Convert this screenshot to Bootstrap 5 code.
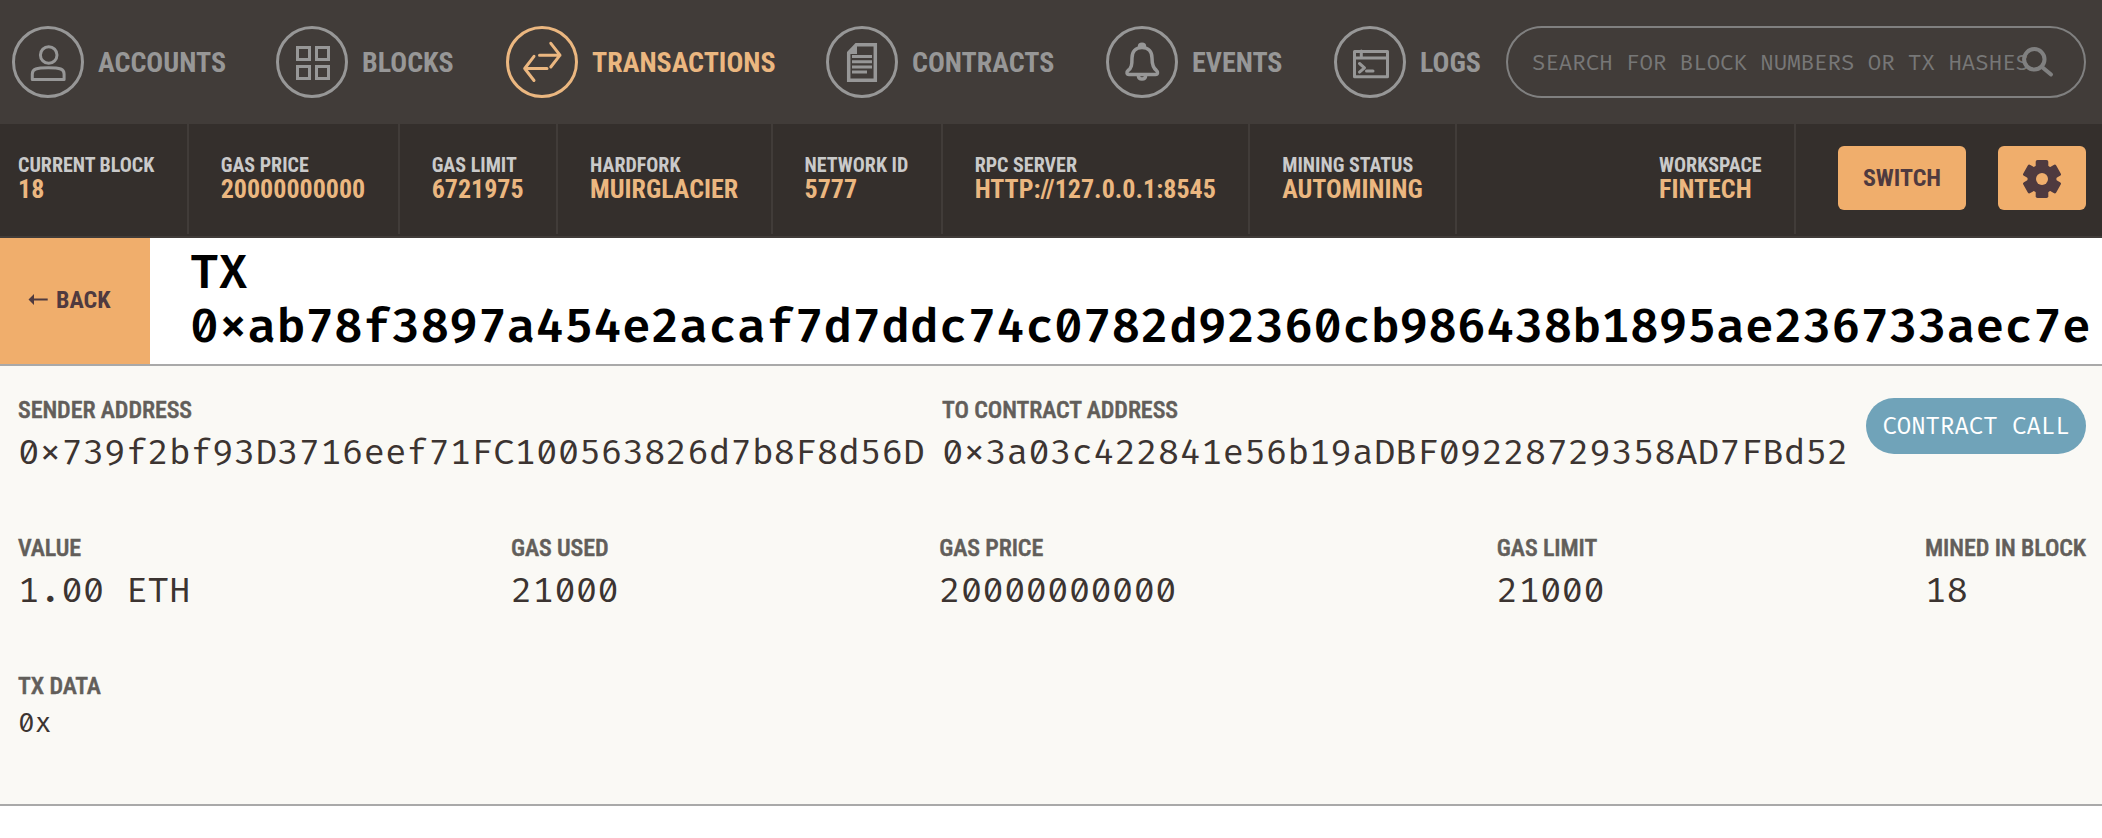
<!DOCTYPE html>
<html lang="en">
<head>
<meta charset="utf-8">
<meta name="viewport" content="width=device-width, initial-scale=1">
<title>TX details</title>
<link rel="stylesheet" href="https://cdn.jsdelivr.net/npm/bootstrap@5.3.0/dist/css/bootstrap.min.css">
<style>
:root{--cond:"Roboto Condensed",Roboto,sans-serif;--code:"Fira Code","Fira Mono","Liberation Mono",monospace;--peach:#ebb780;--peach-solid:#f0ae6c;--plum:#4f3a3f}
body{background:#fff;font-family:var(--cond)}
.topnav{height:124px;background:#413c39;padding:0 16px 0 12px}
.topnav-link{color:#979797;font-weight:700;font-size:28px;line-height:1;white-space:nowrap;text-decoration:none}
.topnav-link svg{width:72px;height:72px;flex:none;margin-right:14px}
.topnav-link span{padding-top:1px}
.topnav-link.current{color:var(--peach)}
.w-accounts{width:264px}.w-blocks{width:230px}.w-tx{width:320px}.w-contracts{width:280px}.w-events{width:228px}
.search{width:580px;height:72px;border:2px solid #808080;border-radius:36px}
.search input{background:none;border:0;outline:0;width:100%;height:100%;padding:2px 24px 0;font:400 21.84px var(--code);color:#777}
.search input::placeholder{color:#777;opacity:1}
.search svg{position:absolute;left:508px;top:15px}
.infobar{height:114px;background:#342f2c;border-bottom:2px solid #413c39;padding-right:16px}
.cell{height:110px;border-right:2px solid #413c39;padding:29px 32.4px 0 32px;font-weight:700;white-space:nowrap}
.cell:first-child{padding-left:18px}
.cell dt{font-size:20px;line-height:24px;color:#cacaca;font-weight:700}
.cell dd{font-size:26px;line-height:24px;color:var(--peach);margin:0}
.btn-peach{--bs-btn-bg:#f0ae6c;--bs-btn-color:#4f3a3f;--bs-btn-hover-bg:#e9a765;--bs-btn-border-radius:6px;border:0;height:64px;font:700 24px/1 var(--cond);padding:0;margin-top:22px}
.btn-switch{width:128px;margin-left:42px;margin-right:32px}
.btn-gear{width:88px}
.titlebar{height:128px;border-bottom:2px solid #a9a9a9}
.back{width:150px;background:var(--peach-solid);color:var(--plum);font:700 24px/1 var(--cond);border:0;padding:0 0 2px 28px}
.titlebar h1{font:600 46.8px/54px var(--code);color:#000;margin:9px 0 0 40px;white-space:nowrap}
.details{height:440px;background:#faf9f5;border-bottom:2px solid #a9a9a9;padding:30px 16px 0 18px;color:#3c3431}
.field{height:138px}
.field h2{font:500 24px/28px var(--cond);letter-spacing:-.08px;-webkit-text-stroke:.5px #625e5a;color:#625e5a;margin:0;white-space:nowrap}
.field p{font:400 35.1px/44px var(--code);margin:8px 0 0;white-space:nowrap}
.field p.bytes{font-size:27.3px;line-height:32px}
.pill{width:220px;height:56px;border-radius:28px;background:#70a3b9;color:#fff;font:400 23.4px/1 var(--code);margin-top:2px;padding-top:2px}
</style>
</head>
<body>
<nav class="topnav d-flex align-items-center">
  <a class="topnav-link d-flex align-items-center w-accounts"><svg viewBox="0 0 72 72" fill="none" stroke="currentColor" stroke-width="3"><circle cx="36" cy="36" r="34.5"/><circle cx="36.7" cy="29" r="8.300"/><path d="M20.300 53.500v-5.500c0-5 4-6.200 16-6.200s15.800 1.200 15.800 6.200v5.500z" stroke-linejoin="round"/></svg><span>ACCOUNTS</span></a>
  <a class="topnav-link d-flex align-items-center w-blocks"><svg viewBox="0 0 72 72" fill="none" stroke="currentColor" stroke-width="3"><circle cx="36" cy="36" r="34.5"/><path d="M21.500 21.500h12v12h-12zM40.500 21.500h12v12h-12zM21.500 40.500h12v12h-12zM40.500 40.500h12v12h-12z"/></svg><span>BLOCKS</span></a>
  <a class="topnav-link current d-flex align-items-center w-tx"><svg viewBox="0 0 72 72" fill="none" stroke="currentColor" stroke-width="3"><circle cx="36" cy="36" r="34.5"/><path d="M33.500 29.200H54M44.800 17.300L54 29.200 44.800 41M41 42.500H18.700M28 30.300L18.700 42.500 28 54.500" stroke-linecap="round" stroke-linejoin="round"/></svg><span>TRANSACTIONS</span></a>
  <a class="topnav-link d-flex align-items-center w-contracts"><svg viewBox="0 0 72 72" fill="none" stroke="currentColor" stroke-width="3"><circle cx="36" cy="36" r="34.5"/><path d="M22.700 27v27.200h26.600V18.700H30" stroke-width="3.500"/><path d="M21 26l8.500-9H31v11H21z" fill="currentColor" stroke="none"/><path d="M26 30.500h20M26 35.700h20M26 40.900h20M26 46h15"/></svg><span>CONTRACTS</span></a>
  <a class="topnav-link d-flex align-items-center w-events"><svg viewBox="0 0 72 72" fill="none" stroke="currentColor" stroke-width="3"><circle cx="36" cy="36" r="34.5"/><path d="M36 21.500c-6.500 0-10 4.500-10 10.500 0 7-.5 10-4 12.500-1.500 1.200-1.500 4 1 4h26.500c2.500 0 2.500-2.800 1-4-3.500-2.500-4.500-5.500-4.500-12.500 0-6-3.500-10.500-10-10.500zM33.500 20.500c0-3 5-3 5 0M32.300 49.500c.3 4.800 7.100 4.800 7.400 0" stroke-width="3.500"/></svg><span>EVENTS</span></a>
  <a class="topnav-link d-flex align-items-center"><svg viewBox="0 0 72 72" fill="none" stroke="currentColor" stroke-width="3"><circle cx="36" cy="36" r="34.5"/><path d="M20.500 25.500h33v25.300h-33zM20.500 32h33M27.300 25v7M25.500 37.500l5 4.300-5 4.300M32.500 45h6.500" stroke-linejoin="round" stroke-linecap="round"/></svg><span>LOGS</span></a>
  <div class="search position-relative ms-auto"><input type="text" placeholder="SEARCH FOR BLOCK NUMBERS OR TX HASHES"><svg width="44" height="44" viewBox="0 0 44 44" fill="none" stroke="#808080" stroke-width="4" stroke-linecap="round"><circle cx="18.300" cy="16.300" r="10.200"/><path d="M26 24l9 7.500"/></svg></div>
</nav>
<div class="infobar d-flex">
  <dl class="cell m-0"><dt>CURRENT BLOCK</dt><dd>18</dd></dl>
  <dl class="cell m-0"><dt>GAS PRICE</dt><dd>20000000000</dd></dl>
  <dl class="cell m-0"><dt>GAS LIMIT</dt><dd>6721975</dd></dl>
  <dl class="cell m-0"><dt>HARDFORK</dt><dd>MUIRGLACIER</dd></dl>
  <dl class="cell m-0"><dt>NETWORK ID</dt><dd>5777</dd></dl>
  <dl class="cell m-0"><dt>RPC SERVER</dt><dd>HTTP://127.0.0.1:8545</dd></dl>
  <dl class="cell m-0"><dt>MINING STATUS</dt><dd>AUTOMINING</dd></dl>
  <dl class="cell m-0 ms-auto"><dt>WORKSPACE</dt><dd>FINTECH</dd></dl>
  <button class="btn btn-peach btn-switch">SWITCH</button>
  <button class="btn btn-peach btn-gear d-flex align-items-center justify-content-center" aria-label="Settings"><svg width="40" height="40" viewBox="-20 -21 40 40" fill="currentColor"><circle r="14.500"/><rect x="-6.300" y="-19" width="12.600" height="38" rx="1.800"/><rect x="-6.300" y="-19" width="12.600" height="38" rx="1.800" transform="rotate(60)"/><rect x="-6.300" y="-19" width="12.600" height="38" rx="1.800" transform="rotate(120)"/><circle r="6" fill="#f0ae6c"/></svg></button>
</div>
<header class="titlebar d-flex">
  <button class="back d-flex align-items-center"><svg class="me-2" width="20" height="12" viewBox="0 0 20 12" fill="currentColor"><path d="M.5 5.500L6 0v4.600h13.700v1.900H6V11z"/></svg>BACK</button>
  <h1>TX<br>0xab78f3897a454e2acaf7d7ddc74c0782d92360cb986438b1895ae236733aec7e</h1>
</header>
<main class="details">
  <div class="d-flex justify-content-between">
    <div class="field"><h2>SENDER ADDRESS</h2><p>0x739f2bf93D3716eef71FC100563826d7b8F8d56D</p></div>
    <div class="field"><h2>TO CONTRACT ADDRESS</h2><p>0x3a03c422841e56b19aDBF09228729358AD7FBd52</p></div>
    <div class="pill d-flex align-items-center justify-content-center">CONTRACT CALL</div>
  </div>
  <div class="d-flex justify-content-between">
    <div class="field"><h2>VALUE</h2><p>1.00 ETH</p></div>
    <div class="field"><h2>GAS USED</h2><p>21000</p></div>
    <div class="field"><h2>GAS PRICE</h2><p>20000000000</p></div>
    <div class="field"><h2>GAS LIMIT</h2><p>21000</p></div>
    <div class="field"><h2>MINED IN BLOCK</h2><p>18</p></div>
  </div>
  <div class="field"><h2>TX DATA</h2><p class="bytes">0x</p></div>
</main>
<script src="https://cdn.jsdelivr.net/npm/bootstrap@5.3.0/dist/js/bootstrap.bundle.min.js"></script>
</body>
</html>
